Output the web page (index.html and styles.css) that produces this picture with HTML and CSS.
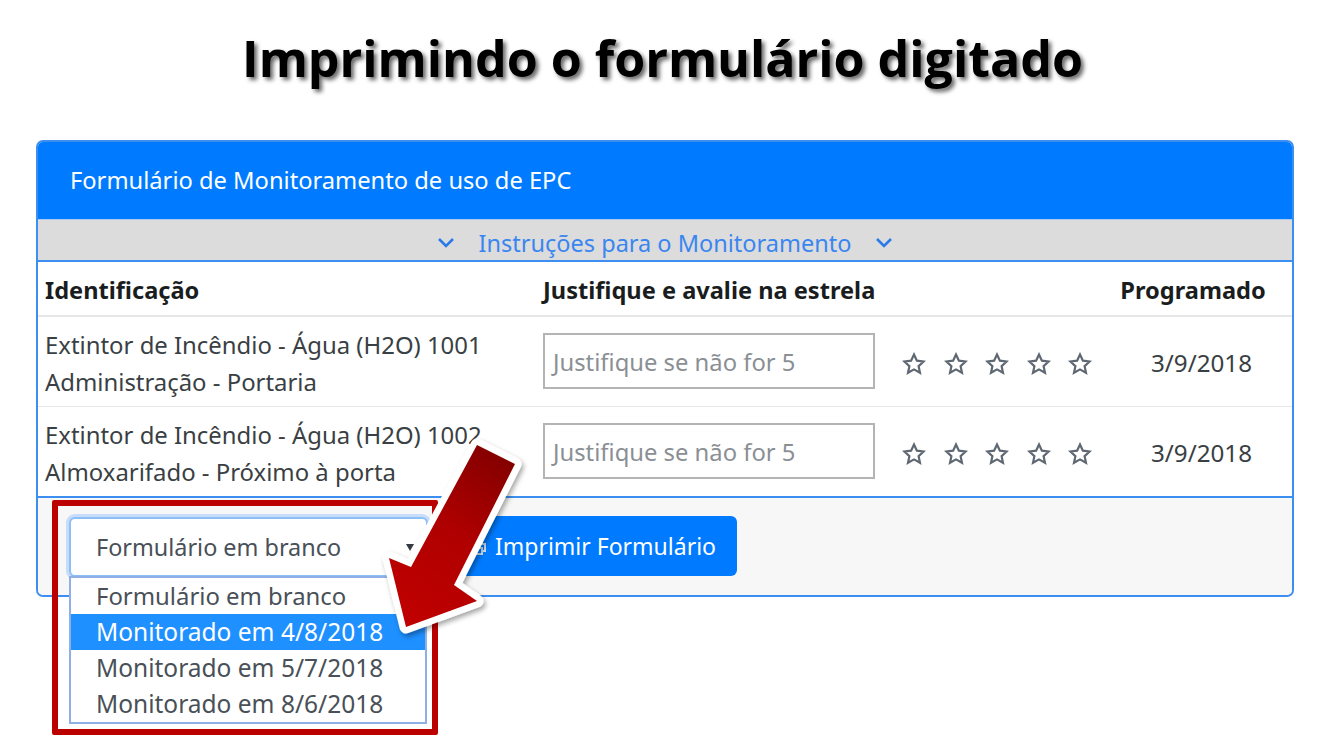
FILE: index.html
```html
<!DOCTYPE html>
<html lang="pt-BR">
  <head>
    <meta charset="utf-8" />
    <title>Imprimindo o formulário digitado</title>
    <link rel="stylesheet" href="styles.css">
  </head>
  <body>
    <h1 class="slide-title">Imprimindo o formulário digitado</h1>
    <div class="card">
      <div class="card-header">Formulário de Monitoramento de uso de EPC</div>
      <div class="instructions">
        <svg class="chevron" viewBox="0 0 18 12"><path d="M2 2l7 7 7-7" /></svg>
        <span>Instruções para o Monitoramento</span>
        <svg class="chevron" viewBox="0 0 18 12"><path d="M2 2l7 7 7-7" /></svg>
      </div>
      <div class="row head-row">
        <div>Identificação</div>
        <div class="col-span">Justifique e avalie na estrela</div>
        <div class="col-date">Programado</div>
      </div>
      <div class="row item-row">
        <div class="item-name">Extintor de Incêndio - Água (H2O) 1001<br />Administração - Portaria</div>
        <div class="fake-input">Justifique se não for 5</div>
        <div class="stars">
          <svg class="star" viewBox="0 0 24 24"><path d="M12 2.5l2.9 6.2 6.7.8-5 4.6 1.4 6.7-6-3.4-6 3.4 1.4-6.7-5-4.6 6.7-.8z" /></svg>
          <svg class="star" viewBox="0 0 24 24"><path d="M12 2.5l2.9 6.2 6.7.8-5 4.6 1.4 6.7-6-3.4-6 3.4 1.4-6.7-5-4.6 6.7-.8z" /></svg>
          <svg class="star" viewBox="0 0 24 24"><path d="M12 2.5l2.9 6.2 6.7.8-5 4.6 1.4 6.7-6-3.4-6 3.4 1.4-6.7-5-4.6 6.7-.8z" /></svg>
          <svg class="star" viewBox="0 0 24 24"><path d="M12 2.5l2.9 6.2 6.7.8-5 4.6 1.4 6.7-6-3.4-6 3.4 1.4-6.7-5-4.6 6.7-.8z" /></svg>
          <svg class="star" viewBox="0 0 24 24"><path d="M12 2.5l2.9 6.2 6.7.8-5 4.6 1.4 6.7-6-3.4-6 3.4 1.4-6.7-5-4.6 6.7-.8z" /></svg>
        </div>
        <div class="col-date">3/9/2018</div>
      </div>
      <div class="row item-row last-row">
        <div class="item-name">Extintor de Incêndio - Água (H2O) 1002<br />Almoxarifado - Próximo à porta</div>
        <div class="fake-input">Justifique se não for 5</div>
        <div class="stars">
          <svg class="star" viewBox="0 0 24 24"><path d="M12 2.5l2.9 6.2 6.7.8-5 4.6 1.4 6.7-6-3.4-6 3.4 1.4-6.7-5-4.6 6.7-.8z" /></svg>
          <svg class="star" viewBox="0 0 24 24"><path d="M12 2.5l2.9 6.2 6.7.8-5 4.6 1.4 6.7-6-3.4-6 3.4 1.4-6.7-5-4.6 6.7-.8z" /></svg>
          <svg class="star" viewBox="0 0 24 24"><path d="M12 2.5l2.9 6.2 6.7.8-5 4.6 1.4 6.7-6-3.4-6 3.4 1.4-6.7-5-4.6 6.7-.8z" /></svg>
          <svg class="star" viewBox="0 0 24 24"><path d="M12 2.5l2.9 6.2 6.7.8-5 4.6 1.4 6.7-6-3.4-6 3.4 1.4-6.7-5-4.6 6.7-.8z" /></svg>
          <svg class="star" viewBox="0 0 24 24"><path d="M12 2.5l2.9 6.2 6.7.8-5 4.6 1.4 6.7-6-3.4-6 3.4 1.4-6.7-5-4.6 6.7-.8z" /></svg>
        </div>
        <div class="col-date">3/9/2018</div>
      </div>
      <div class="card-footer">
        <div class="select-wrap">
          <div class="select-box">
            <span>Formulário em branco</span>
            <span class="caret"></span>
          </div>
          <ul class="select-menu">
            <li class="blank">Formulário em branco</li>
            <li class="selected">Monitorado em 4/8/2018</li>
            <li>Monitorado em 5/7/2018</li>
            <li>Monitorado em 8/6/2018</li>
          </ul>
        </div>
        <button class="print-button">
          <svg class="print-icon" viewBox="0 0 20 20"><path d="M5 8V2h10v6M5 15H2V8h16v7h-3M5 12h10v6H5z" /></svg>
          Imprimir Formulário
        </button>
      </div>
    </div>
    <div class="highlight-box"></div>
    <svg class="big-arrow" viewBox="0 0 1323 744">
      <defs>
        <linearGradient id="arrowFill" x1="515" y1="450" x2="400" y2="620" gradientUnits="userSpaceOnUse">
          <stop offset="0" stop-color="#7f0000" />
          <stop offset="0.5" stop-color="#b00000" />
          <stop offset="1" stop-color="#c00000" />
        </linearGradient>
        <filter id="arrowShadow" x="-20%" y="-20%" width="140%" height="140%">
          <feDropShadow dx="2" dy="3" stdDeviation="2.5" flood-color="#000" flood-opacity="0.35" />
        </filter>
      </defs>
      <path class="arrow-shape" filter="url(#arrowShadow)" d="M477 445L515 464L454 585L477 601L406 627L389 558L411 567Z" />
    </svg>
  </body>
</html>
```

FILE: styles.css
```css
html,
body {
  margin: 0;
  padding: 0;
  height: 744px;
  overflow: hidden;
  background: #fff;
  font-family: "Noto Sans", "Open Sans", sans-serif;
  color: #212529;
}

.slide-title {
  margin: 0;
  height: 140px;
  padding: 0 0 26px 2px;
  box-sizing: border-box;
  display: flex;
  align-items: center;
  justify-content: center;
  font-family: "Open Sans", sans-serif;
  font-weight: 700;
  font-size: 50.1px;
  color: #000;
  text-shadow: 3px 3px 4px rgba(0, 0, 0, 0.6);
}

.card {
  width: 1258px;
  height: 457px;
  margin-left: 36px;
  box-sizing: border-box;
  border: 2px solid #3c8ff0;
  border-radius: 7px;
  display: flex;
  flex-direction: column;
}

.card-header {
  height: 77px;
  box-sizing: border-box;
  flex: none;
  background: #007bff;
  border-radius: 5px 5px 0 0;
  color: #fff;
  font-size: 23.7px;
  display: flex;
  align-items: center;
  padding: 0 0 2px 32px;
}

.instructions {
  height: 43px;
  box-sizing: border-box;
  flex: none;
  background: #dcdcdc;
  border-top: 1px solid #a8c8f0;
  border-bottom: 2px solid #3c8ff0;
  padding-top: 5px;
  display: flex;
  align-items: center;
  justify-content: center;
  gap: 24px;
  color: #3a86f0;
  font-size: 23.5px;
}

.chevron {
  width: 18px;
  height: 12px;
  fill: none;
  stroke: #2a7ae8;
  stroke-width: 2.6;
}

.row {
  display: grid;
  grid-template-columns: 498px 332px 1fr 176px;
  box-sizing: border-box;
  align-items: center;
  padding-left: 7px;
}

.head-row {
  height: 55px;
  flex: none;
  padding-top: 3px;
  font-weight: 700;
  font-size: 23.6px;
  color: #1a1d20;
  border-bottom: 2px solid #e4e6e8;
}

.head-row .col-span {
  grid-column: 2 / 4;
}

.head-row .col-date {
  padding-right: 22px;
  white-space: nowrap;
}

.item-row {
  height: 90px;
  flex: none;
  padding-bottom: 1px;
  font-size: 23.9px;
  border-bottom: 1px solid #e4e6e8;
  color: #3a3f44;
}

.last-row {
  height: 91px;
  border-bottom: 2px solid #3c8ff0;
}

.item-name {
  padding-top: 3px;
  line-height: 37px;
  white-space: nowrap;
}

.col-date {
  text-align: center;
}

.item-row .col-date {
  padding: 3px 5px 0 0;
  font-size: 24.2px;
}

.fake-input {
  height: 56px;
  box-sizing: border-box;
  border: 2px solid #b4b4b4;
  padding: 2px 0 0 8px;
  display: flex;
  align-items: center;
  font-size: 23.8px;
  color: #8a8f94;
}

.stars {
  display: flex;
  gap: 17.5px;
  padding: 5px 0 0 27px;
}

.star {
  width: 24px;
  height: 24px;
  fill: none;
  stroke: #5f6872;
  stroke-width: 2.2;
}

.card-footer {
  flex: 1;
  background: #f7f7f7;
  border-radius: 0 0 5px 5px;
  display: flex;
  align-items: flex-start;
  gap: 20px;
  padding: 19px 0 0 31px;
}

.select-wrap {
  position: relative;
  width: 359px;
  z-index: 2;
}

.select-box {
  height: 60px;
  box-sizing: border-box;
  background: #fff;
  border: 2px solid #8ec0f8;
  border-radius: 6px;
  box-shadow: 0 0 0 3px #c6dcfa;
  display: flex;
  align-items: center;
  justify-content: space-between;
  padding: 0 12px 0 25px;
  font-size: 23.4px;
  color: #495057;
}

.caret {
  width: 0;
  height: 0;
  border-left: 4px solid transparent;
  border-right: 4px solid transparent;
  border-top: 7px solid #343a40;
}

.select-menu {
  position: absolute;
  top: 59px;
  left: 0;
  width: 358px;
  box-sizing: border-box;
  margin: 0;
  padding: 0;
  list-style: none;
  background: #fff;
  border: 2px solid #8fb0e6;
  font-size: 24.5px;
  color: #495057;
}

.select-menu li {
  height: 36px;
  line-height: 36px;
  padding-left: 25px;
  white-space: nowrap;
}

.select-menu .blank {
  font-size: 23.9px;
}

.select-menu .selected {
  background: #1e90ff;
  color: #fff;
}

.print-button {
  width: 289px;
  height: 60px;
  margin-top: -1px;
  border: none;
  border-radius: 6px;
  background: #007bff;
  color: #fff;
  font-family: inherit;
  font-size: 23px;
  display: flex;
  align-items: center;
  justify-content: flex-end;
  gap: 8px;
  padding: 0 21px 0 0;
}

.print-icon {
  width: 20px;
  height: 20px;
  fill: none;
  stroke: #cfe3fb;
  stroke-width: 2;
}

.highlight-box {
  position: absolute;
  left: 52px;
  top: 500px;
  width: 386px;
  height: 235px;
  box-sizing: border-box;
  border: 6px solid #bb0000;
  border-radius: 2px;
  z-index: 3;
}

.big-arrow {
  position: absolute;
  left: 0;
  top: 0;
  width: 1323px;
  height: 744px;
  z-index: 4;
}

.arrow-shape {
  fill: url(#arrowFill);
  stroke: #fff;
  stroke-width: 13;
  stroke-linejoin: round;
  paint-order: stroke;
}
```
